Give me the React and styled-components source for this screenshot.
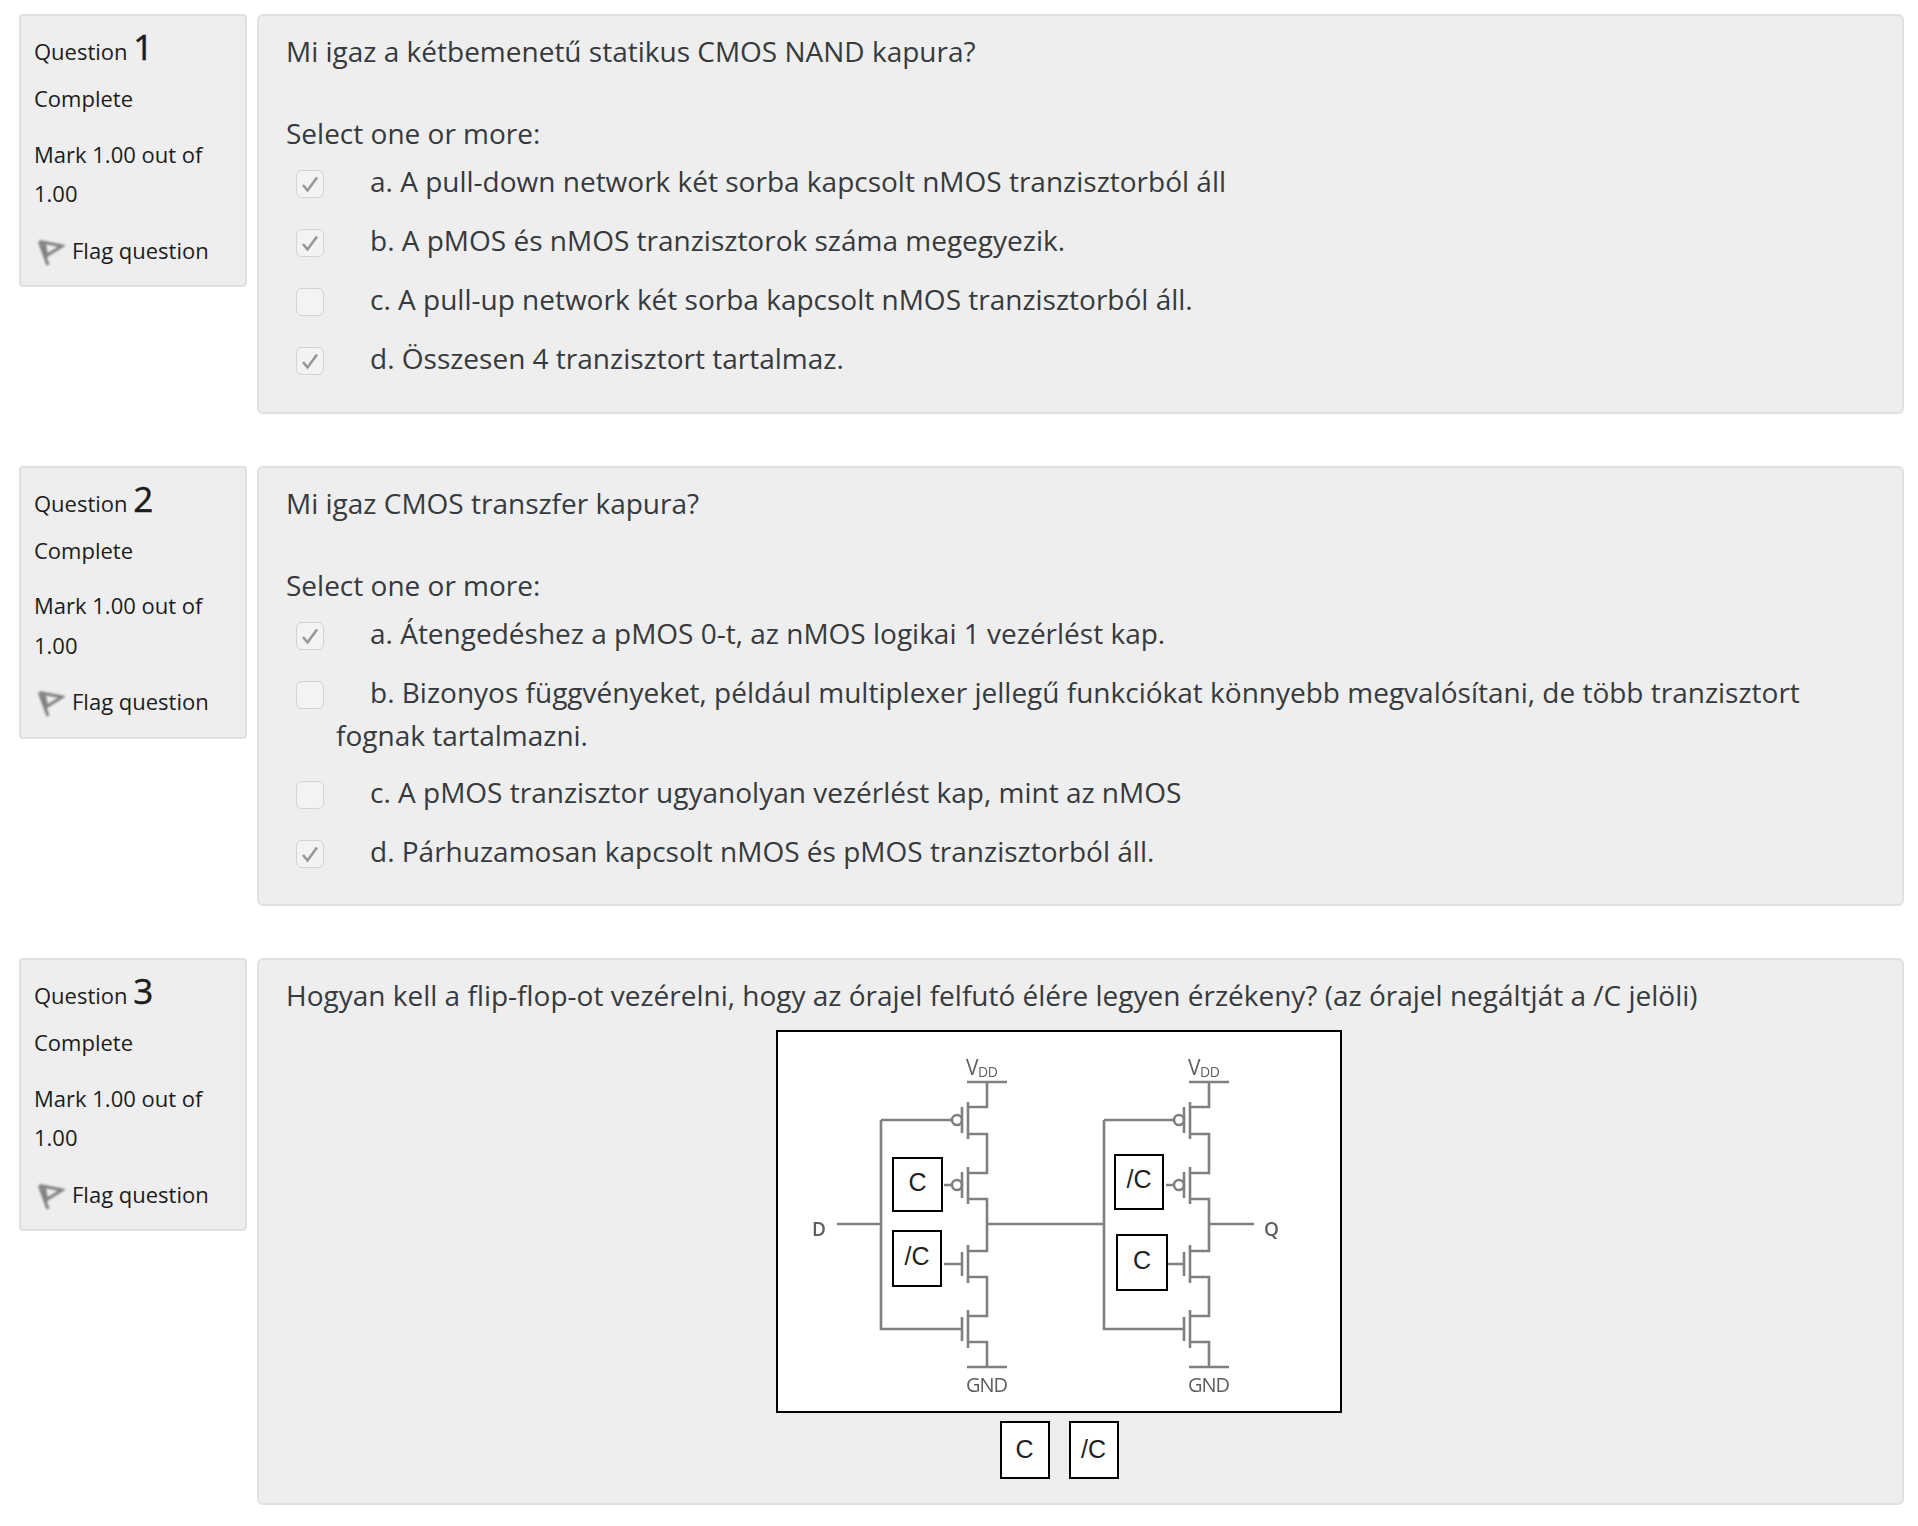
import React from "react";
import styled, { createGlobalStyle } from "styled-components";

const Global = createGlobalStyle`
  html, body { margin: 0; padding: 0; background: #fff; }
  body { font-family: "Open Sans", "Noto Sans", sans-serif; color: #373a3c; }
`;
const Page = styled.div`
  width: 1918px; height: 1526px; box-sizing: border-box; overflow: hidden;
  padding: 14px 14px 0 19px;
  display: flex; flex-direction: column; gap: 51.5px;
`;
const Question = styled.section`display: flex; align-items: flex-start; gap: 10px;`;
const Info = styled.aside`
  width: 228px; height: 273px; box-sizing: border-box; flex: none;
  padding: 12px 13px; background: #eee; border: 2px solid #e0e0e0; border-radius: 4px;
  font-size: 22px; line-height: 39.6px; color: #1c1c1c;
`;
const Title = styled.h3`margin: 0; font: inherit; height: 38px; line-height: 38px; white-space: nowrap;`;
const Num = styled.span`font-size: 35px; font-weight: 400; -webkit-text-stroke: 0.5px #1c1c1c;`;
const State = styled.div`margin-top: 13px;`;
const Grade = styled.div`margin-top: 16px;`;
const FlagRow = styled.div`display: flex; align-items: center; gap: 7px; margin-top: 17px; padding-left: 3px;`;
const Content = styled.div`
  flex: none; width: 1647px; box-sizing: border-box; background: #eee;
  border: 2px solid #e0e0e0; border-radius: 6px;
  padding: 14px 27px ${p => p.$bottom}px;
  font-size: 28px; line-height: 42px; color: #373a3c;
`;
const Prompt = styled.p`margin: 0 0 ${p => p.$gap}px; white-space: nowrap;`;
const Hint = styled.div`margin-bottom: 7px;`;
const Options = styled.div`display: flex; flex-direction: column; gap: 16px;`;
const Option = styled.div`
  padding-left: 50px; text-indent: -40px; line-height: 41.6px;
`;
const Box = styled.span`
  display: inline-flex; align-items: center; justify-content: center;
  width: 28px; height: 28px; box-sizing: border-box; text-indent: 0;
  vertical-align: top; margin: 9px 46px 6px 0;
  background: #f3f3f3; border: 1.5px solid #d3d3d3; border-radius: 6px;
`;
const Stage = styled.div`position: relative; width: 566px; height: 383px; margin: 14px 0 0 490px; box-sizing: border-box; background: #fff; border: 2px solid #000;`;
const Tray = styled.div`display: flex; justify-content: center; gap: 19px; width: 566px; margin: 8px 0 0 490px;`;
const Chip = styled.div`
  width: ${p => p.$w}px; height: ${p => p.$h ?? 58}px; box-sizing: border-box; flex: none;
  background: #fff; border: 2px solid #000;
  display: flex; align-items: center; justify-content: center;
  font-family: "Liberation Sans", Arial, sans-serif; font-size: 25px; line-height: 1; color: #222;
`;
const Drop = styled(Chip)`position: absolute; left: ${p => p.$x}px; top: ${p => p.$y}px; padding-bottom: 4px;`;
const Diagram = styled.svg`display: block; position: absolute; left: -2px; top: -2px;`;
const Wires = styled.g`fill: none; stroke: #808080; stroke-width: 2.6; filter: blur(0.55px);`;
const Label = styled.text`font-family: "Open Sans", sans-serif; fill: #5f5f5f; font-size: ${p => p.$s}px; letter-spacing: ${p => p.$ls ?? 0}px; filter: blur(0.4px);`;

const Check = () => (
  <svg width="20" height="20" viewBox="0 0 20 20"><path d="M3 11 L7.5 16.5 L17 3.5" fill="none" stroke="#979797" strokeWidth="2.6" /></svg>
);
const Flag = () => (
  <svg width="28" height="30" viewBox="0 0 28 30" style={{ filter: "blur(0.8px)", marginTop: 6 }}>
    <path d="M2.5 2.5 L11 26 M2.5 2.5 L25 7 L9 17 M7 4 L9.5 16" fill="none" stroke="#808080" strokeWidth="3.2" />
  </svg>
);

const Side = ({ n }) => (
  <Info>
    <Title>Question <Num>{n}</Num></Title>
    <State>Complete</State>
    <Grade>Mark 1.00 out of 1.00</Grade>
    <FlagRow><Flag />Flag question</FlagRow>
  </Info>
);

const Pair = ({ x, gateIn }) => {
  const c = x - 19, g = x - 25;
  const pm = y => (
    <>
      <path d={`M${c} ${y - 18}V${y + 19}M${g} ${y - 13}V${y + 13}`} />
      <circle cx={g - 5} cy={y} r="5" />
    </>
  );
  const nm = y => <path d={`M${c} ${y - 19}V${y + 19}M${g} ${y - 12}V${y + 12}`} />;
  return (
    <>
      <path d={`M${x - 20} 52H${x + 20}M${x} 52V77H${c}M${c} 104H${x}V143H${c}M${c} 169H${x}V221H${c}M${c} 247H${x}V286H${c}M${c} 312H${x}V337M${x - 20} 337H${x + 20}`} />
      {pm(90)}{pm(155)}{nm(234)}{nm(299)}
      <path d={`M${gateIn} 90H${g - 10}M${gateIn} 90V299H${g}M${x - 43} 155H${g - 10}M${x - 43} 234H${g}`} />
    </>
  );
};

const Circuit = () => (
  <Diagram width="566" height="383" viewBox="0 0 566 383">
    <Wires>
      <Pair x={211} gateIn={105} />
      <Pair x={433} gateIn={328} />
      <path d="M61 194H105M211 194H328M433 194H478" />
    </Wires>
    <Label x="190" y="45" $s="21" $ls="-0.5">V<tspan fontSize="14" dy="2">DD</tspan></Label>
    <Label x="412" y="45" $s="21" $ls="-0.5">V<tspan fontSize="14" dy="2">DD</tspan></Label>
    <Label x="190" y="362" $s="20" $ls="-1">GND</Label>
    <Label x="412" y="362" $s="20" $ls="-1">GND</Label>
    <Label x="36" y="206" $s="19" fontWeight="600">D</Label>
    <Label x="488" y="206" $s="19" fontWeight="600">Q</Label>
  </Diagram>
);

const OptionList = ({ items }) => (
  <Options>
    {items.map(([t, on]) => (
      <Option key={t}><Box>{on && <Check />}</Box>{t}</Option>
    ))}
  </Options>
);

export default function App() {
  return (
    <Page>
      <Global />
      <Question>
        <Side n="1" />
        <Content $bottom={31}>
          <Prompt $gap={40}>Mi igaz a kétbemenetű statikus CMOS NAND kapura?</Prompt>
          <Hint>Select one or more:</Hint>
          <OptionList items={[
            ["a. A pull-down network két sorba kapcsolt nMOS tranzisztorból áll", true],
            ["b. A pMOS és nMOS tranzisztorok száma megegyezik.", true],
            ["c. A pull-up network két sorba kapcsolt nMOS tranzisztorból áll.", false],
            ["d. Összesen 4 tranzisztort tartalmaz.", true],
          ]} />
        </Content>
      </Question>
      <Question>
        <Side n="2" />
        <Content $bottom={30.4}>
          <Prompt $gap={40}>Mi igaz CMOS transzfer kapura?</Prompt>
          <Hint>Select one or more:</Hint>
          <OptionList items={[
            ["a. Átengedéshez a pMOS 0-t, az nMOS logikai 1 vezérlést kap.", true],
            ["b. Bizonyos függvényeket, például multiplexer jellegű funkciókat könnyebb megvalósítani, de több tranzisztort fognak tartalmazni.", false],
            ["c. A pMOS tranzisztor ugyanolyan vezérlést kap, mint az nMOS", false],
            ["d. Párhuzamosan kapcsolt nMOS és pMOS tranzisztorból áll.", true],
          ]} />
        </Content>
      </Question>
      <Question>
        <Side n="3" />
        <Content $bottom={24}>
          <Prompt $gap={0}>Hogyan kell a flip-flop-ot vezérelni, hogy az órajel felfutó élére legyen érzékeny? (az órajel negáltját a /C jelöli)</Prompt>
          <Stage>
            <Circuit />
            <Drop $w={51} $h={55} $x={114} $y={125}>C</Drop>
            <Drop $w={50} $h={57} $x={114} $y={198}>/C</Drop>
            <Drop $w={50} $h={56} $x={336} $y={122}>/C</Drop>
            <Drop $w={52} $h={57} $x={338} $y={202}>C</Drop>
          </Stage>
          <Tray>
            <Chip $w={50}>C</Chip>
            <Chip $w={50}>/C</Chip>
          </Tray>
        </Content>
      </Question>
    </Page>
  );
}
